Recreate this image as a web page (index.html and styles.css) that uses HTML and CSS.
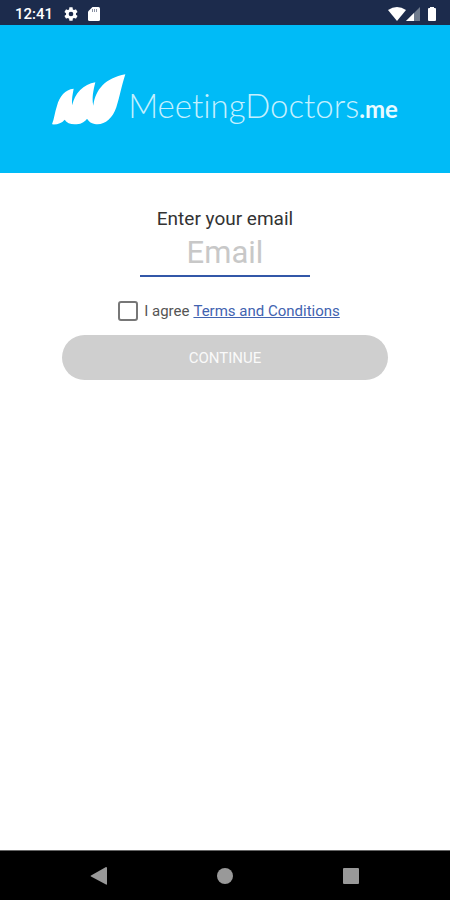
FILE: index.html
```html
<!DOCTYPE html>
<html lang="en">
<head>
<meta charset="utf-8">
<meta name="viewport" content="width=device-width, initial-scale=1">
<title>MeetingDoctors.me</title>
<link rel="stylesheet" href="styles.css">
</head>
<body>
<div class="status">
  <div class="status-group">
    <span class="time">12:41</span>
    <svg class="gear" width="16" height="16" viewBox="0 0 24 24" aria-hidden="true"><path fill="#fff" fill-rule="evenodd" d="M19.4 13c.1-.3.1-.7.1-1s0-.7-.1-1l2.1-1.6c.2-.2.2-.4.1-.6l-2-3.5c-.1-.2-.4-.3-.6-.2l-2.5 1a7 7 0 0 0-1.7-1l-.4-2.6c0-.3-.2-.5-.4-.5h-4c-.2 0-.4.2-.5.4l-.4 2.7a7 7 0 0 0-1.7 1l-2.4-1c-.3-.1-.5 0-.6.2l-2 3.5c-.2.2-.1.4.1.6L4.600 11a7 7 0 0 0 0 2l-2.100 1.600c-.2.2-.3.4-.1.600l2 3.500c.1.2.3.3.6.2l2.400-1c.6.4 1.100.8 1.700 1l.4 2.700c.1.2.3.4.500.4h4c.2 0 .4-.2.4-.4l.4-2.700a7 7 0 0 0 1.700-1l2.500 1c.2.1.5 0 .6-.2l2-3.500c.1-.2.1-.4-.1-.600zM12 15.500a3.500 3.500 0 1 1 0-7 3.500 3.500 0 0 1 0 7z"/></svg>
    <svg width="12" height="14" viewBox="0 0 12 14" aria-hidden="true"><path fill="#fff" d="M4.500 0H10.500Q12 0 12 1.500V12.500Q12 14 10.500 14H1.500Q0 14 0 12.500V4.500Z"/><path stroke="#8a91a3" d="M4.500 2v3M6.500 2v3M8.500 2v3"/></svg>
  </div>
  <div class="status-icons">
    <svg width="18" height="14" viewBox="0 0 18 14" aria-hidden="true"><path fill="#fff" d="M0 3Q9-3 18 3L9 14Z"/></svg>
    <svg width="14" height="14" viewBox="0 0 14 14" aria-hidden="true"><path fill="#6f7b8d" d="M14 0V14H0Z"/><path fill="#fff" d="M8 6V14H0Z"/></svg>
    <svg class="battery" width="8" height="14" viewBox="0 0 8 14" aria-hidden="true"><path fill="#fff" d="M2 0H6V1H7Q8 1 8 2V13Q8 14 7 14H1Q0 14 0 13V2Q0 1 1 1H2Z"/></svg>
  </div>
</div>
<header class="brand">
  <svg class="mark" width="74" height="52" viewBox="34 42 222 156" aria-hidden="true"><path fill="#fff" d="M34 193C41 176 42 157 49 137C57 108 73 89 99 86C96 103 92 119 95 136C101 101 129 73 164 67C158 91 153 114 158 137C164 89 194 54 254 43C242 79 238 108 227 142C215 178 189 197 162 192C151 190 144 184 139 176C130 188 119 193 102 193C88 193 78 188 72 179C62 190 51 194 34 193Z"/></svg>
  <h1 class="name">MeetingDoctors<b>.me</b></h1>
</header>
<main>
  <form class="form">
    <label class="label" for="email">Enter your email</label>
    <input class="email" id="email" type="email" placeholder="Email">
    <div class="agree">
      <input class="check" id="agree" type="checkbox">
      <label for="agree">I agree</label>
      <a href="#terms">Terms and Conditions</a>
    </div>
    <button class="continue" type="button">CONTINUE</button>
  </form>
</main>
<nav class="nav">
  <button type="button" aria-label="Back"><svg width="18" height="18" viewBox="0 0 18 18"><path fill="#999" d="M16 0Q17 0 17 1V17Q17 18 16 17.500L1 9.500Q0 9 1 8.500Z"/></svg></button>
  <button type="button" aria-label="Home"><svg width="18" height="18" viewBox="0 0 18 18"><circle cx="9" cy="9" r="8" fill="#999"/></svg></button>
  <button type="button" aria-label="Recent apps"><svg width="18" height="18" viewBox="0 0 18 18"><rect x="1" y="1" width="16" height="16" rx="1" fill="#999"/></svg></button>
</nav>
</body>
</html>
```
FILE: styles.css
```css
* { box-sizing: border-box; }

body {
  margin: 0;
  min-height: 100vh;
  display: flex;
  flex-direction: column;
  background: #fff;
  font-family: Roboto, sans-serif;
}

.status {
  display: flex;
  justify-content: space-between;
  align-items: center;
  height: 25px;
  padding: 2px 14px 0 15px;
  background: #1c2b4c;
  color: #fff;
}

.status-group,
.status-icons {
  display: flex;
  align-items: center;
}

.time {
  font-size: 15px;
  font-weight: 500;
  line-height: 20px;
}

.gear { margin: 0 9px 0 10px; }
.battery { margin-left: 8px; }

.brand {
  display: flex;
  justify-content: center;
  align-items: center;
  gap: 2px;
  height: 148px;
  padding-top: 2px;
  background: #00bbf7;
  color: #fff;
}

.mark { flex: none; }

.name {
  margin: 0;
  padding-top: 14px;
  font-family: Lato, sans-serif;
  font-size: 33px;
  font-variant-ligatures: none;
  font-weight: 300;
  line-height: 40px;
  color: #c4f0ff;
}

.name b {
  font-size: 24px;
  font-weight: 700;
  color: #e8faff;
}

main { flex: 1; }

.form {
  display: flex;
  flex-direction: column;
  align-items: center;
  padding: 33px 62px 0;
}

.label {
  font-size: 19px;
  line-height: 26px;
  color: #333;
}

.email {
  width: 52%;
  height: 45px;
  padding: 0 0 2px;
  border: 0;
  border-bottom: 2px solid #3257a8;
  border-radius: 0;
  outline: 0;
  background: none;
  font-family: inherit;
  font-size: 31px;
  text-align: center;
  color: #333;
}

.email::placeholder { color: #c8c8c8; opacity: 1; }

.agree {
  display: flex;
  align-items: center;
  gap: 4px;
  margin: 24px 0 14px;
  padding-left: 8px;
  font-size: 15px;
  line-height: 20px;
  color: #555;
}

.agree a { color: #4263b0; }

.check {
  appearance: none;
  width: 20px;
  height: 20px;
  margin: 0 2px 0 0;
  border: 2px solid #777;
  border-radius: 3px;
}

.check:checked { background: #3257a8; }

.continue {
  width: 100%;
  height: 45px;
  border: 0;
  border-radius: 23px;
  background: #cfcfcf;
  color: #fafafa;
  font-family: inherit;
  font-size: 15px;
}

.nav {
  display: flex;
  justify-content: center;
  gap: 24%;
  height: 50px;
  border-top: 1px solid #666;
  background: #000;
}

.nav button {
  display: grid;
  place-items: center;
  padding: 0;
  border: 0;
  background: none;
}
```
